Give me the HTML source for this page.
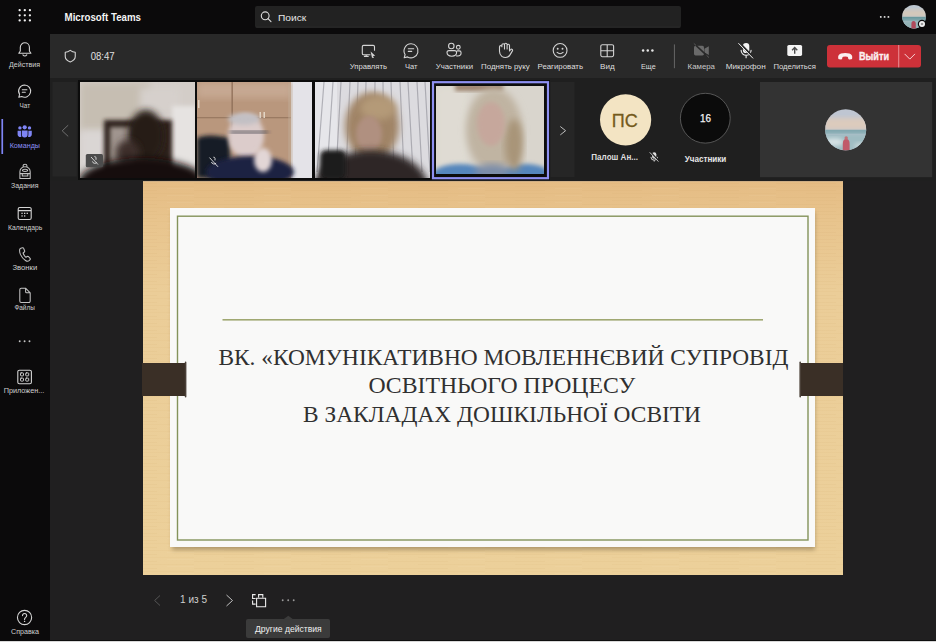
<!DOCTYPE html>
<html><head><meta charset="utf-8">
<style>
*{margin:0;padding:0}
html,body{width:936px;height:642px;overflow:hidden;background:#201f20}
svg{display:block;font-family:"Liberation Sans",sans-serif}
.s{fill:none;stroke:#d4d4d4;stroke-width:1.1;stroke-linecap:round;stroke-linejoin:round}
.sl{fill:#d0d0d0;font-size:8px}
.s2{fill:none;stroke:#c2c2c2;stroke-width:1.05;stroke-linecap:round;stroke-linejoin:round}
.tt{fill:#dedede;font-size:8px}
</style></head><body>
<svg width="936" height="642" viewBox="0 0 936 642">
<defs>
 <linearGradient id="wood" x1="0" y1="0" x2="0" y2="1">
  <stop offset="0" stop-color="#e5bc84"/><stop offset=".1" stop-color="#e8c48d"/><stop offset=".28" stop-color="#ebcd98"/><stop offset="1" stop-color="#ecd09a"/>
 </linearGradient>
 <filter id="b0" x="-20%" y="-20%" width="140%" height="140%"><feGaussianBlur stdDeviation=".5"/></filter>
 <filter id="b1" x="-20%" y="-20%" width="140%" height="140%"><feGaussianBlur stdDeviation="2"/></filter>
 <filter id="b2" x="-20%" y="-20%" width="140%" height="140%"><feGaussianBlur stdDeviation="3.5"/></filter>
 <pattern id="streak" x="0" y="0" width="97" height="7" patternUnits="userSpaceOnUse">
  <rect x="0" y="1" width="60" height=".8" fill="#b8844a" opacity=".07"/>
  <rect x="30" y="4" width="67" height=".7" fill="#b8844a" opacity=".06"/>
  <rect x="70" y="6" width="27" height=".6" fill="#fff" opacity=".07"/>
 </pattern>
 <filter id="sh" x="-10%" y="-10%" width="120%" height="130%"><feGaussianBlur stdDeviation="2"/></filter>
 <clipPath id="c1"><rect x="80" y="82" width="115" height="96"/></clipPath>
 <clipPath id="c2"><rect x="197" y="82" width="115" height="96"/></clipPath>
 <clipPath id="c3"><rect x="315" y="82" width="115" height="96"/></clipPath>
 <clipPath id="c4"><rect x="436" y="86" width="108" height="88"/></clipPath>
 <clipPath id="cav"><circle cx="845.7" cy="129.7" r="20.5"/></clipPath>
 <clipPath id="cav2"><circle cx="914" cy="16.7" r="11.8"/></clipPath>
</defs>

<!-- base regions -->
<rect x="0" y="0" width="936" height="34" fill="#0b0a0b"/>
<rect x="0" y="34" width="50" height="608" fill="#0b0a0b"/>
<rect x="50" y="34" width="886" height="44" fill="#292929"/>
<rect x="50" y="78" width="886" height="103" fill="#1f1f1f"/>
<rect x="50" y="640" width="886" height="1" fill="#0e0e0e"/>
<rect x="0" y="641" width="936" height="1" fill="#d8d8d8"/>

<!-- title bar -->
<g fill="#f4f4f4"><circle cx="19.65" cy="10.2" r="1.15"/><circle cx="24.8" cy="10.2" r="1.15"/><circle cx="29.9" cy="10.2" r="1.15"/><circle cx="19.65" cy="15.3" r="1.15"/><circle cx="24.8" cy="15.3" r="1.15"/><circle cx="29.9" cy="15.3" r="1.15"/><circle cx="19.65" cy="20.45" r="1.15"/><circle cx="24.8" cy="20.45" r="1.15"/><circle cx="29.9" cy="20.45" r="1.15"/></g>
<text x="64.6" y="20.7" font-size="10.5" font-weight="bold" fill="#f4f4f4" textLength="76.4" lengthAdjust="spacingAndGlyphs">Microsoft Teams</text>
<rect x="255" y="6" width="426" height="22" rx="2" fill="#222222"/>
<rect x="256" y="26.6" width="424" height=".8" fill="#2c2c2c"/>
<circle cx="265.2" cy="15.8" r="3.9" class="s" style="stroke:#dcdcdc"/>
<path d="M268 18.6 L271 21.6" class="s" style="stroke:#dcdcdc"/>
<text x="278" y="20.5" font-size="9.6" fill="#e6e6e6" textLength="28.2" lengthAdjust="spacingAndGlyphs">Поиск</text>
<g fill="#e8e8e8"><circle cx="880.8" cy="16.9" r=".95"/><circle cx="884.6" cy="16.9" r=".95"/><circle cx="888.4" cy="16.9" r=".95"/></g>
<g clip-path="url(#cav2)">
 <rect x="901" y="4" width="26" height="26" fill="#bcc6d0"/>
 <rect x="901" y="10" width="26" height="7" fill="#d6c8b8" filter="url(#b1)"/>
 <rect x="901" y="16.8" width="26" height="4" fill="#6b999e"/>
 <rect x="901" y="20" width="26" height="10" fill="#93b2b6" filter="url(#b1)"/>
 <path d="M911.4 29 v-5 q0-3 2.2-3 q2.2 0 2.2 3 v5z" fill="#b04a5c"/>
</g>
<circle cx="922" cy="24" r="4.2" fill="#0b0a0b"/>
<circle cx="922" cy="24" r="3" fill="#f0f0f0"/>
<circle cx="922" cy="24" r="1.3" fill="#9a9a9a"/>

<!-- sidebar -->
<path class="s" d="M18.8 53.2 l1.5-2.2 v-3.7 a4.55 4.55 0 0 1 9.1 0 v3.7 l1.5 2.2 z M22.9 54.9 q1.95 2.1 3.9 0"/>
<text class="sl" x="9" y="66.8" textLength="31" lengthAdjust="spacingAndGlyphs">Действия</text>
<path class="s" d="M24.6 85 a6.1 6.1 0 1 1 -2.9 11.5 l-2.9 .8 .8-2.9 a6.1 6.1 0 0 1 5-9.4z M22.3 89.8h4.6 M22.3 92.3h3"/>
<text class="sl" x="19.6" y="107.8" textLength="10.6" lengthAdjust="spacingAndGlyphs">Чат</text>
<rect x="1.4" y="119" width="1.7" height="35" fill="#7f85f5"/>
<g fill="#7f85f5" transform="translate(0 .9)">
 <circle cx="24.7" cy="126.4" r="2.1"/><circle cx="19.9" cy="127" r="1.7"/><circle cx="29.5" cy="127" r="1.7"/>
 <path d="M21.8 129.6 h5.8 v4 a2.9 2.9 0 0 1 -5.8 0z"/>
 <path d="M17.6 129.8 h3.4 v3.8 q0 1.2 .5 2 a2.4 2.4 0 0 1 -3.9 -1.9z"/>
 <path d="M28.4 129.8 h3.4 v3.9 a2.4 2.4 0 0 1 -3.9 1.9 q.5-.8 .5-2z"/>
</g>
<text class="sl" x="9.7" y="148" textLength="30.3" lengthAdjust="spacingAndGlyphs" style="fill:#8b90f6">Команды</text>
<path class="s2" d="M23.1 166.6 v-.5 a1.95 1.95 0 0 1 3.9 0 v.5 M19.9 178.4 v-6.6 a5.15 5.15 0 0 1 10.3 0 v6.6z M19.9 173.6 h10.3 M22.3 173.6 v2.4 h5.5 v-2.4"/><ellipse class="s2" cx="25.05" cy="170.3" rx="2.6" ry="1.1"/>
<text class="sl" x="11" y="187.8" textLength="27.5" lengthAdjust="spacingAndGlyphs">Задания</text>
<path class="s" d="M19.8 207.5 h9.8 a1.6 1.6 0 0 1 1.6 1.6 v8.8 a1.6 1.6 0 0 1 -1.6 1.6 h-9.8 a1.6 1.6 0 0 1 -1.6-1.6 v-8.8 a1.6 1.6 0 0 1 1.6-1.6z M18.2 210.6 h13"/>
<g fill="#d4d4d4"><rect x="21.4" y="212.7" width="1.3" height="1.3"/><rect x="24" y="212.7" width="1.3" height="1.3"/><rect x="26.6" y="212.7" width="1.3" height="1.3"/><rect x="21.4" y="215.3" width="1.3" height="1.3"/><rect x="24" y="215.3" width="1.3" height="1.3"/></g>
<text class="sl" x="8" y="230" textLength="34.3" lengthAdjust="spacingAndGlyphs">Календарь</text>
<path class="s2" transform="translate(-.8 .8)" d="M21.6 247.4 l1.7-.5 q.8-.2 1.1.6 l1 2.4 q.3.8-.3 1.3 l-1.2 1 q.6 2.3 2.8 4.3 l1.3-.8 q.7-.4 1.3.2 l1.6 1.7 q.5.6 0 1.3 l-1 1 q-1.5 1.2-3.6-.2 q-3.4-2.3-5.1-6.1 q-1.2-3-.6-5.2 q.3-.8 1-1z"/>
<text class="sl" x="12.4" y="270.4" textLength="24.9" lengthAdjust="spacingAndGlyphs">Звонки</text>
<path class="s2" d="M21.2 288.3 h4.6 l4.4 4.5 v8.3 a1.4 1.4 0 0 1 -1.4 1.4 h-7.6 a1.4 1.4 0 0 1 -1.4-1.4 v-11.4 a1.4 1.4 0 0 1 1.4-1.4z M25.6 288.5 v3.2 a1 1 0 0 0 1 1 h3.4"/>
<text class="sl" x="14.4" y="310.2" textLength="20.4" lengthAdjust="spacingAndGlyphs">Файлы</text>
<g fill="#c4c4c4"><circle cx="19.7" cy="341.3" r=".95"/><circle cx="24.6" cy="341.3" r=".95"/><circle cx="29.5" cy="341.3" r=".95"/></g>
<path class="s" d="M19.4 370.2 h10.4 a1.6 1.6 0 0 1 1.6 1.6 v10.4 a1.6 1.6 0 0 1 -1.6 1.6 h-10.4 a1.6 1.6 0 0 1 -1.6-1.6 v-10.4 a1.6 1.6 0 0 1 1.6-1.6z"/>
<g class="s" style="stroke-width:.95"><rect x="20.5" y="372.9" width="3" height="3" rx=".6"/><rect x="25.7" y="372.9" width="3" height="3" rx=".6"/><rect x="20.5" y="378.1" width="3" height="3" rx=".6"/><rect x="25.7" y="378.1" width="3" height="3" rx=".6"/></g>
<text class="sl" x="3.7" y="393.3" textLength="40.6" lengthAdjust="spacingAndGlyphs">Приложен...</text>
<circle class="s" cx="24.55" cy="617.5" r="7.1"/>
<path class="s" d="M22.5 615.6 a2.1 2.1 0 1 1 3.2 1.8 q-1.1.6-1.1 1.7 v.5"/>
<circle cx="24.6" cy="621.4" r=".7" fill="#d4d4d4"/>
<text class="sl" x="11.1" y="633.6" textLength="27.9" lengthAdjust="spacingAndGlyphs">Справка</text>

<!-- toolbar -->
<path class="s" d="M70.25 50.4 q2.4 1.8 5 1.9 v4.2 q0 3.7-5 5.4 q-5-1.7-5-5.4 v-4.2 q2.6-.1 5-1.9z"/>
<text x="90.7" y="60" font-size="10.5" fill="#e0e0e0" textLength="24" lengthAdjust="spacingAndGlyphs">08:47</text>

<path class="s" d="M363.6 45.4 h9.6 a1.3 1.3 0 0 1 1.3 1.3 v3.6 M370 54.8 h-6.4 a1.3 1.3 0 0 1 -1.3-1.3 v-6.8 a1.3 1.3 0 0 1 1.3-1.3 M366.2 54.8 v1.4 M364.4 56.4 h3.8"/>
<path d="M370.6 51.6 l4.6 4.2 -2.2.2 1 2 -2-.3z" fill="#d4d4d4"/>
<text class="tt" x="349.7" y="69" textLength="37.3" lengthAdjust="spacingAndGlyphs">Управлять</text>
<path class="s" d="M411 43.8 a7 7 0 1 1 -3.4 13.1 l-3.4 .9 .9-3.3 a7 7 0 0 1 5.9-10.7z M408.3 48.8 h5.4 M408.3 51.4 h3.4"/>
<text class="tt" x="405" y="69" textLength="12.5" lengthAdjust="spacingAndGlyphs">Чат</text>
<circle class="s" cx="451.3" cy="46" r="2.75"/><circle class="s" cx="458.3" cy="47.3" r="1.9"/><path class="s" d="M449 50.6 h5.6 a2 2 0 0 1 2 2 q0 3.6-4.8 3.6 q-4.8 0-4.8-3.6 a2 2 0 0 1 2-2z M457.3 50.9 h1.9 a1.9 1.9 0 0 1 1.9 1.9 q0 3.2-3.3 3.2 q-.7 0-1.2-.15"/>
<text class="tt" x="435.7" y="69" textLength="37.3" lengthAdjust="spacingAndGlyphs">Участники</text>
<path class="s" d="M501.8 56.4 q-2.3-2-2.3-5.2 v-4.4 a1.2 1.2 0 0 1 2.4 0 v-1.7 a1.3 1.3 0 0 1 2.6 0 v-.6 a1.3 1.3 0 0 1 2.6 0 v.9 a1.2 1.2 0 0 1 2.4 0 v5.6 l1.1-1.4 a1.1 1.1 0 0 1 1.8 1.3 l-2.4 4 q-1.5 2.6-4.4 2.6 q-2.1 0-3.8-1.1z M504.5 44.7 v4.2 M507.1 44.5 v4.4"/>
<text class="tt" x="481" y="69" textLength="48.8" lengthAdjust="spacingAndGlyphs">Поднять руку</text>
<circle class="s" cx="560.1" cy="50.4" r="6.9"/>
<circle cx="557.7" cy="48.8" r=".95" fill="#d4d4d4"/><circle cx="562.5" cy="48.8" r=".95" fill="#d4d4d4"/>
<path class="s" d="M557.1 52.4 q3 2.6 6 0"/>
<text class="tt" x="537.5" y="69" textLength="45.5" lengthAdjust="spacingAndGlyphs">Реагировать</text>
<path class="s" d="M602.4 44.7 h9.6 a1.6 1.6 0 0 1 1.6 1.6 v8.8 a1.6 1.6 0 0 1 -1.6 1.6 h-9.6 a1.6 1.6 0 0 1 -1.6-1.6 v-8.8 a1.6 1.6 0 0 1 1.6-1.6z M607.2 44.7 v12 M600.8 50.7 h12.8"/>
<text class="tt" x="600" y="69" textLength="14.7" lengthAdjust="spacingAndGlyphs">Вид</text>
<g fill="#e6e6e6"><circle cx="643.1" cy="50.4" r="1.25"/><circle cx="647.75" cy="50.4" r="1.25"/><circle cx="652.4" cy="50.4" r="1.25"/></g>
<text class="tt" x="641" y="69" textLength="14.7" lengthAdjust="spacingAndGlyphs">Еще</text>
<rect x="673.9" y="44.4" width="1" height="23.8" fill="#666"/>
<g fill="#6a6a6a">
 <rect x="694" y="45.8" width="10" height="9.6" rx="1.6"/>
 <path d="M704.4 48.8 l4.4-2.6 v8.8 l-4.4-2.6z"/>
</g>
<path d="M693.8 43.4 L709 57.6" stroke="#292929" stroke-width="1.5"/>
<path d="M693.8 43.4 L696 45.4 M706.6 55.4 L709 57.6" stroke="#555" stroke-width="1"/>
<text class="tt" x="687.6" y="69" textLength="27.4" lengthAdjust="spacingAndGlyphs" style="fill:#c8c8c8">Камера</text>
<rect x="742.9" y="42.9" width="6.4" height="10.2" rx="3.2" fill="#f2f2f2"/>
<path d="M741.1 50.3 a5 5 0 0 0 10 0 M746.1 55.4 v2.4" fill="none" stroke="#f0f0f0" stroke-width="1.1" stroke-linecap="round"/>
<path d="M739.4 43.2 L753.6 57.9" stroke="#292929" stroke-width="2.6"/>
<path d="M738.7 43.5 L752.8 58.1" stroke="#f0f0f0" stroke-width="1" stroke-linecap="round"/>
<text class="tt" x="725.7" y="69" textLength="40" lengthAdjust="spacingAndGlyphs">Микрофон</text>
<rect x="787.3" y="44.9" width="14.8" height="11" rx="1.6" fill="#f4f4f4"/>
<path d="M794.7 53.8 v-6 M792.1 50.2 l2.6-2.6 2.6 2.6" stroke="#4a4a4a" stroke-width="1.4" fill="none" stroke-linejoin="miter"/>
<text class="tt" x="773.5" y="69" textLength="42.3" lengthAdjust="spacingAndGlyphs">Поделиться</text>

<rect x="827" y="45" width="94" height="22.4" rx="3" fill="#cd3139"/>
<rect x="898.3" y="45" width=".9" height="22.4" fill="#f09aa0"/>
<path d="M838.2 58.3 Q837.7 54.6 841 53.6 Q845.2 52.4 849.4 53.6 Q852.7 54.6 852.2 58.3 Q852.1 59.1 851.3 59.2 L849.1 59.4 Q848.3 59.4 848.2 58.6 L848 57.5 Q847.9 56.9 847.2 56.8 Q845.2 56.3 843.2 56.8 Q842.5 56.9 842.4 57.5 L842.2 58.6 Q842.1 59.4 841.3 59.4 L839.1 59.2 Q838.3 59.1 838.2 58.3Z" fill="#fbeff0"/>
<text x="859" y="59.7" font-size="11" font-weight="bold" fill="#fbeff0" stroke="#fbeff0" stroke-width=".35" textLength="30" lengthAdjust="spacingAndGlyphs">Выйти</text>
<path d="M904.6 53.9 l5.2 5.2 5.2-5.2" fill="none" stroke="#f6d2d5" stroke-width="1"/>

<!-- gallery -->
<rect x="52.5" y="82" width="24.3" height="94.5" fill="#262626"/>
<path d="M68.2 125.2 L62.2 130.8 68.2 136.4" fill="none" stroke="#6e6e6e" stroke-width="1"/>
<rect x="78" y="80" width="472" height="100" fill="#0c0c0c"/>

<!-- tile1 -->
<g clip-path="url(#c1)">
 <rect x="80" y="82" width="115" height="96" fill="#d3cdc8"/>
 <rect x="80" y="82" width="70" height="50" fill="#c6beb2" filter="url(#b2)"/>
 <rect x="140" y="88" width="40" height="24" fill="#d6d0cc" filter="url(#b2)"/>
 <rect x="80" y="130" width="26" height="40" fill="#dad6d4" filter="url(#b2)"/>
 <rect x="172" y="106" width="24" height="64" fill="#e6e3e1" filter="url(#b1)"/>
 <rect x="104" y="120" width="68" height="60" fill="#2e221e" filter="url(#b1)"/>
 <rect x="110" y="127" width="22" height="42" fill="#a0958f" filter="url(#b1)"/>
 <ellipse cx="146" cy="136" rx="18" ry="26" fill="#261c19" filter="url(#b2)"/>
 <ellipse cx="128" cy="153" rx="12" ry="13" fill="#3c2e2a" filter="url(#b2)"/>
 <ellipse cx="142" cy="184" rx="64" ry="26" fill="#161111" filter="url(#b2)"/>
 <rect x="85.8" y="154" width="17.2" height="13.3" rx="1.5" fill="#4c4c4c"/>
</g>
<path d="M91 157 L98 164.5 M92.4 161.4 a2.5 2.5 0 0 0 4.4 1 M94.4 156.6 a1.4 1.4 0 0 1 1.6 1.2 v2" stroke="#e0e0e0" stroke-width=".9" fill="none"/>

<!-- tile2 -->
<g clip-path="url(#c2)">
 <rect x="197" y="82" width="115" height="96" fill="#b9977d"/>
 <rect x="197" y="82" width="95" height="16" fill="#c6a892" filter="url(#b2)"/>
 <rect x="231.5" y="82" width="1.3" height="60" fill="#8e6e58"/>
 <rect x="197" y="117" width="95" height="1.3" fill="#9a7a62"/>
 <rect x="259.5" y="112" width="1.4" height="6" fill="#e8dccc"/>
 <rect x="263.5" y="112" width="1.4" height="6" fill="#e8dccc"/>
 <rect x="198" y="100" width="1.5" height="8" fill="#e0d0c0"/>
 <rect x="291" y="82" width="21" height="96" fill="#e4e3e8"/>
 <rect x="289" y="82" width="3" height="96" fill="#c2ae9a" filter="url(#b1)"/>
 <path d="M197 138 q10-5 33 0 v40 h-33z" fill="#181a28" filter="url(#b1)"/>
 <ellipse cx="246" cy="136" rx="18" ry="22" fill="#dccccb" filter="url(#b1)"/>
 <ellipse cx="244" cy="119" rx="16" ry="6" fill="#c2c0c4" filter="url(#b1)"/>
 <rect x="230" y="131" width="38" height="2.4" fill="#3c3c46" filter="url(#b1)"/>
 <ellipse cx="250" cy="172" rx="44" ry="16" fill="#1a2142" filter="url(#b1)"/>
 <ellipse cx="263" cy="160" rx="9" ry="12" fill="#e2d6d6" filter="url(#b1)"/>
</g>
<path d="M209.5 157.6 L218 166.8 M211.5 162 a2.6 2.6 0 0 0 4.6 1 M213.4 157.2 a1.4 1.4 0 0 1 1.6 1.2 v2" stroke="#e8e8e8" stroke-width=".9" fill="none"/>

<!-- tile3 -->
<g clip-path="url(#c3)">
 <rect x="315" y="82" width="115" height="96" fill="#dcdbdf"/>
 <rect x="315" y="82" width="22" height="96" fill="#e6e6ea"/>
 <g stroke="#85858e" stroke-width="1.2" opacity=".55" filter="url(#b0)">
  <path d="M324 82 L317 172 M333 82 L327 172 M341 82 L336 172 M350 82 L346 172 M358 82 L355 172 M366 82 L364 172 M375 82 L374 172 M383 82 L384 172 M391 82 L394 172 M400 82 L404 172 M408 82 L413 172 M417 82 L422 172 M425 82 L430 172"/>
 </g>
 <ellipse cx="372" cy="126" rx="27" ry="34" fill="#a08466" filter="url(#b2)"/>
 <ellipse cx="378" cy="108" rx="18" ry="12" fill="#b49a78" filter="url(#b2)"/>
 <ellipse cx="369" cy="134" rx="13" ry="18" fill="#b09080" filter="url(#b1)"/>
 <ellipse cx="371" cy="188" rx="57" ry="38" fill="#2e2828" filter="url(#b2)"/>
 <rect x="320" y="150" width="26" height="30" rx="6" fill="#1e1b1b" filter="url(#b1)"/>
</g>

<!-- tile4 -->
<rect x="433" y="82.2" width="115" height="96" fill="none" stroke="#8e90f2" stroke-width="2.2"/>
<g clip-path="url(#c4)">
 <rect x="436" y="86" width="108" height="88" fill="#d9d5cd"/>
 <rect x="436" y="86" width="32" height="88" fill="#dfdbd3" filter="url(#b2)"/>
 <rect x="455" y="84" width="48" height="7" fill="#9a806c" filter="url(#b1)"/>
 <ellipse cx="460" cy="178" rx="30" ry="14" fill="#5486bc" filter="url(#b1)"/>
 <ellipse cx="525" cy="178" rx="28" ry="14" fill="#5486bc" filter="url(#b1)"/>
 <ellipse cx="494" cy="130" rx="28" ry="42" fill="#c0b4a2" filter="url(#b2)"/>
 <ellipse cx="514" cy="145" rx="9" ry="26" fill="#a89478" filter="url(#b2)"/>
 <ellipse cx="491" cy="124" rx="14" ry="22" fill="#c6a79c" filter="url(#b1)"/>
 <ellipse cx="492" cy="172" rx="18" ry="8" fill="#7a8ca8" filter="url(#b2)"/>
</g>

<rect x="550.5" y="82" width="24" height="95" fill="#262626"/>
<path d="M560.3 126.5 L565.6 130.7 560.3 134.9" fill="none" stroke="#bdbdbd" stroke-width="1"/>

<circle cx="625.6" cy="119.8" r="25.6" fill="#f3e4c3"/>
<text x="611.8" y="126.7" font-size="19" fill="#745a1c" stroke="#745a1c" stroke-width=".3" textLength="26" lengthAdjust="spacingAndGlyphs">ПС</text>
<text x="591.3" y="160.4" font-size="9.2" font-weight="bold" fill="#dedede" textLength="46.7" lengthAdjust="spacingAndGlyphs">Палош Ан...</text>
<rect x="652.1" y="152.2" width="4.2" height="6.6" rx="2.1" fill="#e0e0e0"/>
<path d="M650.9 156.9 a3.3 3.3 0 0 0 6.6 0 M654.2 160.2 v1.4" fill="none" stroke="#e0e0e0" stroke-width=".9"/>
<path d="M650.2 152 L659 161.4" stroke="#1f1f1f" stroke-width="1.8"/>
<path d="M649.7 152.3 L658.4 161.6" stroke="#e0e0e0" stroke-width=".85"/>
<circle cx="705.3" cy="118.2" r="24.9" fill="#0b0b0b" stroke="#666" stroke-width=".8"/>
<text x="700" y="122.2" font-size="10" fill="#f4f4f4" stroke="#f4f4f4" stroke-width=".25" textLength="11" lengthAdjust="spacingAndGlyphs">16</text>
<text x="684.7" y="161.6" font-size="9" font-weight="bold" fill="#e6e6e6" textLength="41.6" lengthAdjust="spacingAndGlyphs">Участники</text>

<rect x="760" y="82" width="172.2" height="95.2" fill="#333333"/>
<g clip-path="url(#cav)">
 <rect x="824" y="108" width="44" height="44" fill="#bfc6d2"/>
 <rect x="824" y="118" width="44" height="12" fill="#dccbbd" filter="url(#b1)"/>
 <rect x="824" y="129.8" width="44" height="4" fill="#7fa6ae"/>
 <rect x="824" y="133" width="44" height="20" fill="#9fbcc2" filter="url(#b1)"/>
 <ellipse cx="834" cy="142" rx="10" ry="4" fill="#d6e2e4" filter="url(#b1)"/>
 <ellipse cx="862" cy="146" rx="8" ry="3" fill="#cddadc" filter="url(#b1)"/>
 <path d="M842.8 152 v-8 q0-5 3.4-5 q3.4 0 3.4 5 v8z" fill="#c05a6a"/>
 <circle cx="846.2" cy="138" r="1.7" fill="#c07478"/>
</g>

<!-- slide -->
<rect x="143" y="181" width="700" height="394" fill="url(#wood)"/>
<rect x="143" y="181" width="700" height="394" fill="url(#streak)"/>
<rect x="143" y="181" width="700" height="1" fill="#c9ab86" opacity=".8"/>
<rect x="172" y="212" width="643" height="338" fill="#6b5838" opacity=".45" filter="url(#sh)"/>
<rect x="170" y="208" width="645" height="339" fill="#f9f9f8"/>
<rect x="177.5" y="216.2" width="630.5" height="323.8" fill="none" stroke="#84935a" stroke-width="1.4"/>
<rect x="222.5" y="319" width="540.5" height="1.6" fill="#a0a872"/>
<rect x="142" y="363" width="44" height="33" fill="#3a2f26"/>
<rect x="800" y="363" width="43" height="33" fill="#3a2f26"/>
<rect x="184.8" y="361.6" width="1.6" height="36" rx=".8" fill="#4a4038"/>
<rect x="799.4" y="361.6" width="1.6" height="36" rx=".8" fill="#4a4038"/>
<g font-family="Liberation Serif, serif" font-size="22.3" fill="#303030">
 <text x="218.4" y="364.8" textLength="570" lengthAdjust="spacingAndGlyphs">ВК. «КОМУНІКАТИВНО МОВЛЕННЄВИЙ СУПРОВІД</text>
 <text x="368.4" y="393.4" textLength="267" lengthAdjust="spacingAndGlyphs">ОСВІТНЬОГО ПРОЦЕСУ</text>
 <text x="303" y="421.5" textLength="398" lengthAdjust="spacingAndGlyphs">В ЗАКЛАДАХ ДОШКІЛЬНОЇ ОСВІТИ</text>
</g>

<!-- bottom controls -->
<path d="M160 595.5 L154.6 600.5 160 605.5" fill="none" stroke="#555" stroke-width="1"/>
<text x="180" y="603.3" font-size="10.5" fill="#cfcfcf" textLength="27" lengthAdjust="spacingAndGlyphs">1 из 5</text>
<path d="M226.5 595 L232.5 600.5 226.5 606" fill="none" stroke="#c0c0c0" stroke-width="1"/>
<path d="M255.6 594.6 h-3 v3.9 h3 M258.6 597.4 v-2.8 h4.2 v2.8 M252.6 600.6 v3.5 h3 M256.6 598.3 h9 v8.4 h-9z" fill="none" stroke="#ececec" stroke-width="1.1"/>
<g fill="#9a9a9a"><circle cx="282.7" cy="600.3" r=".95"/><circle cx="288.2" cy="600.3" r=".95"/><circle cx="293.7" cy="600.3" r=".95"/></g>
<rect x="246" y="619" width="84" height="19" rx="2" fill="#3b3b3b"/>
<path d="M283.5 619.2 L288.3 615.8 293.1 619.2z" fill="#3b3b3b"/>
<text x="255" y="632.2" font-size="9.6" fill="#f0f0f0" textLength="66.7" lengthAdjust="spacingAndGlyphs">Другие действия</text>
</svg>
</body></html>
